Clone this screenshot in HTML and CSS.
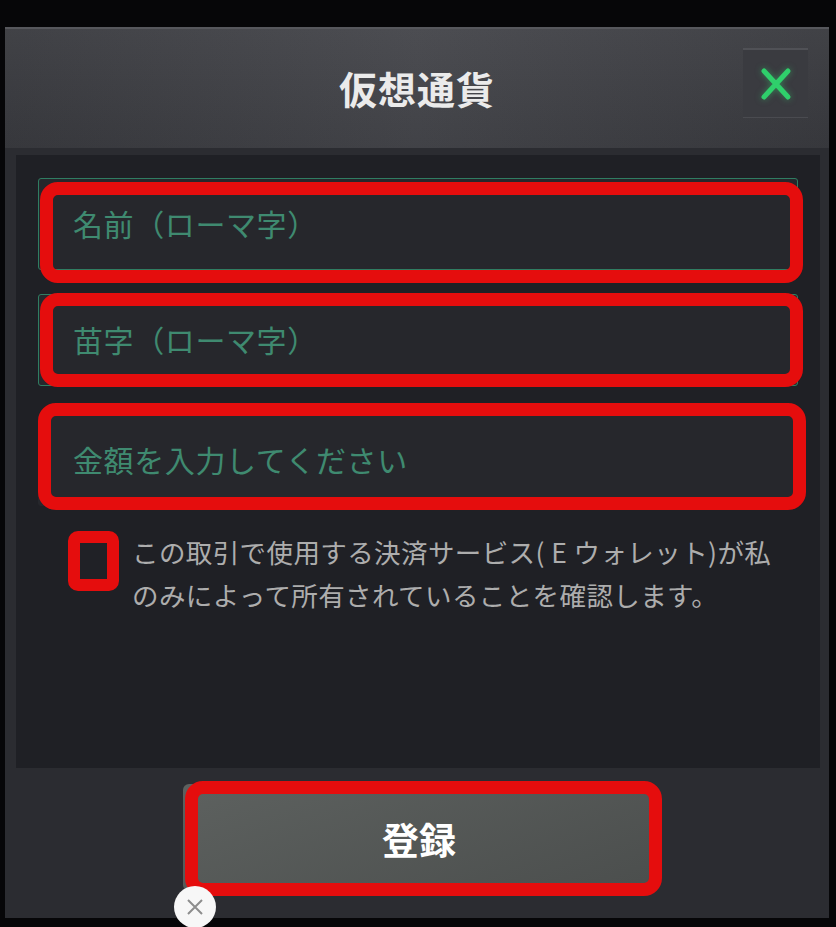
FILE: index.html
```html
<!DOCTYPE html>
<html lang="ja">

<head>
    <meta charset="UTF-8">
    <meta name="viewport" content="width=device-width, initial-scale=1.0">
    <title>仮想通貨</title>
    <link rel="stylesheet" href="styles.css">
</head>

<body>

    <div class="modal">
        <div class="modal-header">
            <span></span>
            <h1 class="modal-title">仮想通貨</h1>
            <button type="button" class="close-button" aria-label="閉じる">
                <svg width="34" height="36" viewBox="0 0 34 36">
                    <path d="M5 5 L29 31 M29 5 L5 31" stroke="#2fd06b" stroke-width="5" stroke-linecap="round" fill="none" />
                </svg>
            </button>
        </div>

        <div class="modal-body">
            <!-- input fields, red boxes are the annotation marks -->
            <div class="field mark-1">
                <input type="text" class="text-input" placeholder="名前（ローマ字）">
            </div>
            <div class="field mark-2">
                <input type="text" class="text-input" placeholder="苗字（ローマ字）">
            </div>
            <div class="field mark-3">
                <input type="text" class="text-input plain" placeholder="金額を入力してください">
            </div>

            <label class="confirm-row">
                <span class="check-box"></span>
                <span class="confirm-text">この取引で使用する決済サービス( E ウォレット)が私<br>のみによって所有されていることを確認します。</span>
            </label>
        </div>

        <div class="modal-footer">
            <button type="button" class="submit-button">登録</button>
        </div>

        <div class="dismiss-badge">
            <svg width="20" height="20" viewBox="0 0 20 20">
                <path d="M3 3 L17 17 M17 3 L3 17" stroke="#8d8d8d" stroke-width="2" fill="none" />
            </svg>
        </div>
    </div>

</body>

</html>
```

FILE: styles.css
```css
body {
    margin: 0;
    background-color: #060608;
    font-family: "Noto Sans CJK JP", "Noto Sans", sans-serif;
    height: 927px;
    overflow: hidden;
}

.modal {
    position: relative;
    margin: 27px 0 0 5px;
    width: 824px;
    height: 891px;
    background-color: #2b2c31;
    display: flex;
    flex-direction: column;
}

.modal-header {
    height: 121px;
    box-sizing: border-box;
    border-top: 2px solid #56575c;
    background: linear-gradient(90deg, rgba(0, 0, 0, 0.08), rgba(255, 255, 255, 0.03) 50%, rgba(0, 0, 0, 0.08)),
        linear-gradient(180deg, #46474c, #3b3c41);
    display: grid;
    grid-template-columns: 1fr auto 1fr;
    align-items: center;
}

.modal-title {
    margin: 0;
    font-size: 38px;
    font-weight: 700;
    color: #ebebeb;
    letter-spacing: 1px;
    padding-bottom: 2px;
}

.close-button {
    justify-self: end;
    align-self: start;
    margin: 19px 21px 0 0;
    width: 65px;
    height: 70px;
    padding: 0;
    border: none;
    border-top: 2px solid #505156;
    border-bottom: 1px solid #4a4b50;
    background-color: #3a3b40;
    display: flex;
    align-items: center;
    justify-content: center;
    cursor: pointer;
}

.close-button svg {
    filter: drop-shadow(0 0 3px rgba(47, 208, 107, 0.5));
}

.modal-body {
    margin: 7px 9px 0 11px;
    height: 613px;
    background-color: #1f2025;
    padding: 23px 22px 0 22px;
    box-sizing: border-box;
    display: flex;
    flex-direction: column;
}

.field {
    position: relative;
    width: 760px;
}

.field + .field {
    margin-top: 24px;
}

.field.mark-3 {
    margin-top: 28px;
}

.text-input {
    display: block;
    width: 100%;
    height: 92px;
    box-sizing: border-box;
    background-color: #26272c;
    border: 1px solid #2f7d62;
    border-radius: 3px;
    padding: 0 0 2px 34px;
    font-family: "Noto Sans CJK JP", sans-serif;
    font-size: 30px;
    letter-spacing: 0.6px;
    color: #cfd3d1;
    outline: none;
}

.text-input.plain {
    border-color: #26272c;
}

.text-input::placeholder {
    color: #3f8a70;
}

/* red annotation boxes */
.field::after,
.check-box::after,
.modal-footer .submit-button::after {
    content: "";
    position: absolute;
    border: 13px solid #e50d0d;
    border-radius: 18px;
    pointer-events: none;
}

.mark-1::after {
    top: 4px;
    bottom: -13px;
    left: 2px;
    right: -5px;
}

.mark-2::after {
    top: -1px;
    bottom: -1px;
    left: 2px;
    right: -5px;
}

.mark-3::after {
    top: -11px;
    bottom: -4px;
    left: 0;
    right: -8px;
}

.confirm-row {
    display: flex;
    align-items: flex-start;
    margin-top: 24px;
    padding-left: 42px;
}

.check-box {
    position: relative;
    flex: none;
    width: 27px;
    height: 36px;
    margin-top: 13px;
    background-color: #202126;
}

.check-box::after {
    top: -12px;
    bottom: -12px;
    left: -12px;
    right: -12px;
    border-width: 12px;
    border-radius: 10px;
}

.confirm-text {
    margin-left: 25px;
    font-size: 26.5px;
    line-height: 43px;
    letter-spacing: 0.4px;
    color: #adadad;
}

.modal-footer {
    flex: 1;
    display: flex;
    justify-content: center;
    align-items: flex-start;
    padding-top: 16px;
}

.submit-button {
    position: relative;
    width: 472px;
    height: 107px;
    margin-left: 4px;
    border: none;
    border-radius: 6px;
    background: linear-gradient(160deg, #5d615f, #4b4e4d);
    color: #ffffff;
    font-family: "Noto Sans CJK JP", sans-serif;
    font-size: 37px;
    font-weight: 700;
    padding-top: 4px;
    cursor: pointer;
}

.submit-button::after {
    top: -3px;
    bottom: -5px;
    left: 2px;
    right: -7px;
}

.dismiss-badge {
    position: absolute;
    left: 169px;
    top: 859px;
    width: 42px;
    height: 42px;
    border-radius: 50%;
    background-color: #f7f7f7;
    display: flex;
    align-items: center;
    justify-content: center;
}
```
